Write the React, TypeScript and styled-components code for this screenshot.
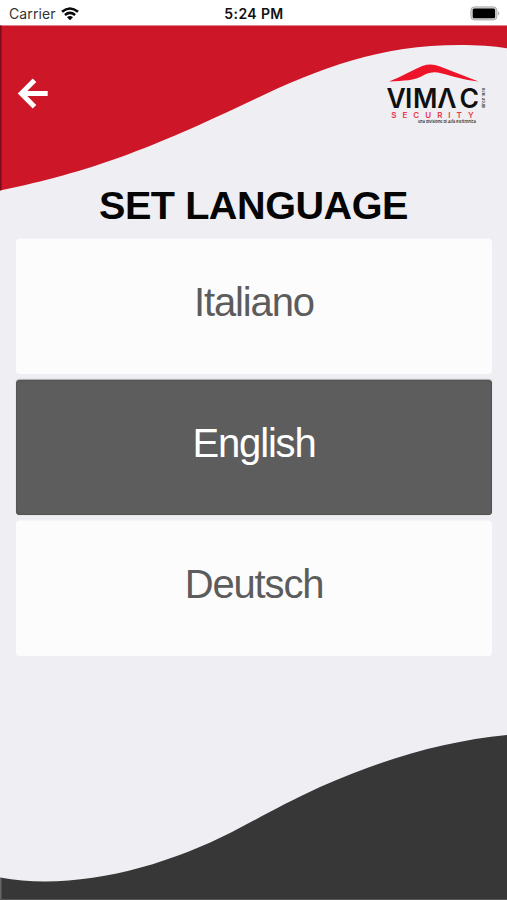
import React, { useState } from "react";
import styled, { createGlobalStyle } from "styled-components";

const GlobalStyle = createGlobalStyle`
  * { box-sizing: border-box; }
  body { margin: 0; background: #efeef3; }
`;

const Screen = styled.div`
  position: relative;
  width: 507px;
  height: 900px;
  overflow: hidden;
  display: flex;
  flex-direction: column;
  background: #efeef3;
  font-family: "Liberation Sans", Arial, sans-serif;
`;

const Backdrop = styled.svg`
  position: absolute;
  inset: 0;
  pointer-events: none;
`;

const StatusBar = styled.div`
  position: relative;
  flex: none;
  height: 25px;
  padding: 2px 6px 0 9px;
  display: grid;
  grid-template-columns: 1fr auto 1fr;
  align-items: center;
  font-family: Inter, sans-serif;
  font-size: 14px;
  color: #111;
`;

const Carrier = styled.span`
  display: flex;
  align-items: center;
  gap: 5px;
  color: #333;
  letter-spacing: 0.1px;
`;

const Clock = styled.span`
  font-weight: 600;
  font-size: 14px;
  letter-spacing: 0.4px;
  margin-right: 2px;
`;

const BatteryIcon = styled.svg`
  justify-self: end;
`;

const Header = styled.header`
  position: relative;
  flex: none;
  height: 155px;
  padding: 37px 18px 0 17px;
  display: flex;
  justify-content: space-between;
  align-items: flex-start;
`;

const BackButton = styled.button`
  margin: 15px 0 0;
  padding: 0;
  border: 0;
  background: none;
  line-height: 0;
`;

const Title = styled.h1`
  position: relative;
  flex: none;
  margin: 0;
  height: 59px;
  line-height: 50px;
  text-align: center;
  font-size: 39.6px;
  font-weight: 700;
  letter-spacing: -0.45px;
  color: #050505;
`;

const LanguageList = styled.div`
  position: relative;
  display: flex;
  flex-direction: column;
  gap: 6px;
  padding: 0 15px 0 16px;
`;

const LanguageButton = styled.button<{ $selected: boolean }>`
  height: 135px;
  padding: 0 0 9px;
  border: 0;
  border-radius: 4px;
  font: 400 40px "Liberation Sans", Arial, sans-serif;
  letter-spacing: -1.15px;
  color: ${(p) => (p.$selected ? "#fff" : "#5c5c5c")};
  background: ${(p) => (p.$selected ? "#5d5d5d" : "#fcfcfc")};
  box-shadow: ${(p) => (p.$selected ? "inset 0 0 1px 1px #555, 0 -0.5px 1px #aaa" : "0 -0.5px 0 #fcfcfc")};
`;

const Waves = () => (
  <Backdrop width="507" height="900" viewBox="0 0 507 900">
    <rect width="507" height="25.3" fill="#fff" />
    <path
      d="M0 25.5H507V48.3C493 46 478 45 460 45C380 45 320 68 254 99.5C150 149 90 172 0 190.5Z"
      fill="#cd1628"
    />
    <path d="M0 25.5H1.5V190L0 190.5Z" fill="#7c0b1a" />
    <path
      d="M0 877.5C15 880 29 881.4 45 881.4C108 881.4 175 861 232 832C261 817 285 803 320 787C388 757 447 741 507 735V900H0Z"
      fill="#373737"
    />
    <path d="M0 878L1.5 878.2V900H0Z" fill="#666" />
    <rect y="899" width="507" height="1" fill="#555" />
  </Backdrop>
);

const WifiIcon = () => (
  <svg width="18" height="14" viewBox="0 0 18 14" fill="none" stroke="#080808" strokeWidth="2.5">
    <path d="M1 4.8Q9-1.9 17 4.8" />
    <path d="M3.9 8Q9 3.7 14.1 8" />
    <path d="M6 10.2Q9 7.7 12 10.2L9 13.3Z" fill="#080808" stroke="none" />
  </svg>
);

const Battery = () => (
  <BatteryIcon width="31" height="15" viewBox="0 0 31 15">
    <rect x="0.9" y="0.9" width="26" height="13" rx="3.5" fill="#d8d8d8" stroke="#aaa" />
    <rect x="2.7" y="2.6" width="22.4" height="9.6" rx="1.5" fill="#000" />
    <path d="M28.3 5.2Q30.3 7.4 28.3 9.6Z" fill="#999" />
  </BatteryIcon>
);

const Logo = () => (
  <svg width="104" height="64" viewBox="385 62 104 64" role="img" aria-label="VIMAC Security">
    <path
      d="M389 81.5C402 76.5 414 69.5 423 65.8Q431 63 440 66.5L478.5 81.5C464 80 452 76 441 73.3C436 71.5 430 71.7 424 75C414 81 404 80.5 389 81.5Z"
      fill="#ed1328"
    />
    <g fontFamily="Inter, sans-serif" fill="#101010">
      <text x="386.5 405 413 437.3 459.5" y="107.6" fontSize="26.5" fontWeight="600">
        VIMΛC
      </text>
      <text x="391.3" y="117.8" fontSize="8" fontWeight="600" fill="#e73949" letterSpacing="6">
        SECURITY
      </text>
      <text x="418" y="122.7" fontSize="4" fontWeight="500" textLength="58" lengthAdjust="spacingAndGlyphs">
        una divisione di Alfa Elettronica
      </text>
      <text
        transform="translate(485 108) rotate(-90)"
        fontSize="3.8"
        fontWeight="500"
        textLength="20"
        lengthAdjust="spacingAndGlyphs"
      >
        since 1978
      </text>
    </g>
  </svg>
);

const languages = ["Italiano", "English", "Deutsch"];

export default function App() {
  const [selected, setSelected] = useState("English");
  return (
    <Screen>
      <GlobalStyle />
      <Waves />
      <StatusBar>
        <Carrier>
          Carrier
          <WifiIcon />
        </Carrier>
        <Clock>5:24 PM</Clock>
        <Battery />
      </StatusBar>
      <Header>
        <BackButton aria-label="Back">
          <svg width="31" height="32" viewBox="0 0 31 32" fill="none" stroke="#fff" strokeWidth="5">
            <path d="M17.5 3.3L4.3 16.5L17.5 29.7M4.5 16.5H30.7" />
          </svg>
        </BackButton>
        <Logo />
      </Header>
      <Title>SET LANGUAGE</Title>
      <LanguageList>
        {languages.map((name) => (
          <LanguageButton key={name} $selected={name === selected} onClick={() => setSelected(name)}>
            {name}
          </LanguageButton>
        ))}
      </LanguageList>
    </Screen>
  );
}
